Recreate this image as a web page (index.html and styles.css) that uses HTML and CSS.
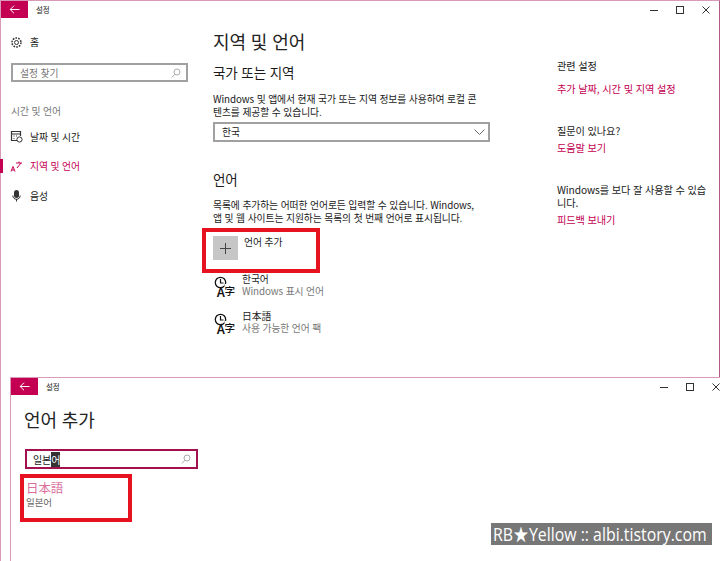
FILE: index.html
```html
<!DOCTYPE html>
<html lang="ko">
<head>
    <meta charset="UTF-8">
    <meta name="viewport" content="width=device-width, initial-scale=1.0">
    <title>설정</title>
    <link rel="stylesheet" href="styles.css">
</head>
<body>
    <!-- first window -->
    <section class="window window-main">
        <header class="titlebar">
            <div class="back-btn">
                <svg width="11" height="9" viewBox="0 0 11 9"><path d="M5 .7 1.200 4.500 5 8.300M1.200 4.500H10.500" fill="none" stroke="#fff" stroke-width="1"/></svg>
            </div>
            <span class="app-name">설정</span>
            <div class="win-controls">
                <svg width="8" height="8" viewBox="0 0 8 8"><path d="M0 4.500H8" stroke="#333" stroke-width="1"/></svg>
                <svg width="8" height="8" viewBox="0 0 8 8"><rect x=".5" y=".5" width="7" height="7" fill="none" stroke="#333"/></svg>
                <svg width="8" height="8" viewBox="0 0 8 8"><path d="M.5.500l7 7M7.500.500l-7 7" stroke="#333" stroke-width="1"/></svg>
            </div>
        </header>

        <div class="columns">
            <nav class="sidebar">
                <div class="nav-item home">
                    <svg class="nav-icon" width="13" height="13" viewBox="0 0 13 13"><circle cx="6.500" cy="6.500" r="2" fill="none" stroke="#333"/><circle cx="6.500" cy="6.500" r="4.500" fill="none" stroke="#333" stroke-width="1.600" stroke-dasharray="1.600 1.200"/></svg>
                    <span>홈</span>
                </div>
                <div class="nav-search">
                    <span>설정 찾기</span>
                    <svg width="10" height="10" viewBox="0 0 10 10"><circle cx="6" cy="4" r="3" fill="none" stroke="#aaa"/><path d="M4 6.200.8 9.400" stroke="#aaa"/></svg>
                </div>
                <div class="nav-heading">시간 및 언어</div>
                <div class="nav-item">
                    <svg class="nav-icon" width="13" height="13" viewBox="0 0 13 13"><path d="M8 10.500H1.500V1.500h9V6M1.500 4h9M3.500 6h1M6 6h1M3.500 8.500h1" fill="none" stroke="#333" stroke-width="1.200"/><circle cx="9.500" cy="9.500" r="2.600" fill="#fff" stroke="#333"/></svg>
                    <span>날짜 및 시간</span>
                </div>
                <div class="nav-item active">
                    <svg class="nav-icon" width="13" height="13" viewBox="0 0 13 13"><path d="M1 11.500 3 6.500l2 5M1.700 10h2.600M6 3h6M9 1.500V3M11 3 7 8" fill="none" stroke="#c30052" stroke-width="1"/></svg>
                    <span>지역 및 언어</span>
                </div>
                <div class="nav-item">
                    <svg class="nav-icon" width="13" height="13" viewBox="0 0 13 13"><rect x="4" y="1" width="5" height="8" rx="2.500" fill="#333"/><path d="M2.800 6.500c0 5 7.400 5 7.400 0M6.500 10v2.500" fill="none" stroke="#333"/></svg>
                    <span>음성</span>
                </div>
            </nav>

            <main class="content">
                <h1 class="page-title">지역 및 언어</h1>
                <h2 class="section-title">국가 또는 지역</h2>
                <p class="desc">Windows 및 앱에서 현재 국가 또는 지역 정보를 사용하여 로컬 콘<br>텐츠를 제공할 수 있습니다.</p>
                <div class="select">
                    <span>한국</span>
                    <svg width="11" height="6" viewBox="0 0 11 6"><path d="M.5.500l5 5 5-5" fill="none" stroke="#666"/></svg>
                </div>
                <h2 class="section-title lang-title">언어</h2>
                <p class="desc">목록에 추가하는 어떠한 언어로든 입력할 수 있습니다. Windows,<br>앱 및 웹 사이트는 지원하는 목록의 첫 번째 언어로 표시됩니다.</p>
                <div class="add-lang">
                    <div class="plus-box">
                        <svg width="11" height="11" viewBox="0 0 11 11"><path d="M5.500 0v11M0 5.500h11" stroke="#444"/></svg>
                    </div>
                    <span>언어 추가</span>
                </div>
                <div class="lang-row">
                    <svg class="lang-icon" width="21" height="23" viewBox="0 0 21 23"><circle cx="6.500" cy="7.500" r="5.200" fill="none" stroke="#111" stroke-width="1.300"/><path d="M6.500 4v4h3" fill="none" stroke="#111" stroke-width="1.200"/><rect x="10.500" y="9" width="10.500" height="13" fill="#fff"/><text x="2.500" y="22" class="glyph-a">A</text><text x="10.500" y="20" class="glyph-ja">字</text></svg>
                    <div>
                        <div class="lang-name">한국어</div>
                        <div class="lang-sub">Windows 표시 언어</div>
                    </div>
                </div>
                <div class="lang-row">
                    <svg class="lang-icon" width="21" height="23" viewBox="0 0 21 23"><circle cx="6.500" cy="7.500" r="5.200" fill="none" stroke="#111" stroke-width="1.300"/><path d="M6.500 4v4h3" fill="none" stroke="#111" stroke-width="1.200"/><rect x="10.500" y="9" width="10.500" height="13" fill="#fff"/><text x="2.500" y="22" class="glyph-a">A</text><text x="10.500" y="20" class="glyph-ja">字</text></svg>
                    <div>
                        <div class="lang-name">日本語</div>
                        <div class="lang-sub">사용 가능한 언어 팩</div>
                    </div>
                </div>
            </main>

            <aside class="related">
                <div class="rel-group">
                    <div class="rel-title first">관련 설정</div>
                    <a class="rel-link">추가 날짜, 시간 및 지역 설정</a>
                </div>
                <div class="rel-group">
                    <div class="rel-title">질문이 있나요?</div>
                    <a class="rel-link">도움말 보기</a>
                </div>
                <div class="rel-group">
                    <div class="rel-title">Windows를 보다 잘 사용할 수 있습<br>니다.</div>
                    <a class="rel-link">피드백 보내기</a>
                </div>
            </aside>
        </div>
        <div class="red-box box-add"></div>
    </section>

    <!-- second window on top -->
    <section class="window window-add">
        <header class="titlebar">
            <div class="back-btn">
                <svg width="11" height="9" viewBox="0 0 11 9"><path d="M5 .7 1.200 4.500 5 8.300M1.200 4.500H10.500" fill="none" stroke="#fff" stroke-width="1"/></svg>
            </div>
            <span class="app-name">설정</span>
            <div class="win-controls">
                <svg width="8" height="8" viewBox="0 0 8 8"><path d="M0 4.500H8" stroke="#333" stroke-width="1"/></svg>
                <svg width="8" height="8" viewBox="0 0 8 8"><rect x=".5" y=".5" width="7" height="7" fill="none" stroke="#333"/></svg>
                <svg width="8" height="8" viewBox="0 0 8 8"><path d="M.5.500l7 7M7.500.500l-7 7" stroke="#333" stroke-width="1"/></svg>
            </div>
        </header>
        <div class="add-body">
            <h1 class="page-title">언어 추가</h1>
            <div class="lang-search">
                <span>일본<mark>어</mark></span>
                <svg width="10" height="10" viewBox="0 0 10 10"><circle cx="6" cy="4" r="3" fill="none" stroke="#aaa"/><path d="M4 6.200.8 9.400" stroke="#aaa"/></svg>
            </div>
            <div class="result">
                <div class="result-name">日本語</div>
                <div class="result-sub">일본어</div>
            </div>
        </div>
        <div class="red-box box-result"></div>
    </section>

    <div class="watermark"><span class="watermark-text">RB★Yellow :: albi.tistory.com</span></div>
</body>
</html>
```

FILE: styles.css
```css
*{
    box-sizing: border-box;
}
html, body{
    margin: 0;
    padding: 0;
    height: 100%;
}
body{
    position: relative;
    width: 720px;
    height: 561px;
    overflow: hidden;
    background: #fff;
    color: #1a1a1a;
    font-family: "Noto Sans CJK KR", "Noto Sans", sans-serif;
    font-size: 9.8px;
    letter-spacing: -0.1px;
}
h1, h2, p{
    margin: 0;
    font-weight: 400;
}

/* windows */
.window{
    position: absolute;
    background: #fff;
    border-top: 1px solid #d79ab8;
    border-left: 1px solid #d79ab8;
}
.window-main{
    left: 0;
    top: 0;
    width: 720px;
    height: 561px;
    border-right: 1px solid #b05a88;
}
.window-add{
    left: 10px;
    top: 377px;
    width: 710px;
    height: 184px;
}
.titlebar{
    display: flex;
    align-items: center;
    height: 17px;
}
.back-btn{
    display: flex;
    align-items: center;
    justify-content: center;
    width: 27px;
    height: 17px;
    background: #c30052;
}
.app-name{
    margin-left: 8px;
    font-size: 7.5px;
}
.win-controls{
    display: flex;
    gap: 18px;
    margin-left: auto;
    margin-right: 9px;
}
.window-add .win-controls{
    margin-right: 0;
}

/* columns */
.columns{
    display: flex;
}
.sidebar{
    flex: none;
    width: 212px;
    padding-top: 16px;
}
.nav-item{
    display: flex;
    align-items: center;
    gap: 7px;
    height: 29.5px;
    padding-left: 9px;
    position: relative;
}
.nav-item.home{
    height: 16px;
}
.nav-icon{
    flex: none;
}
.nav-item.active{
    color: #c30052;
}
.nav-item.active::before{
    content: "";
    position: absolute;
    left: -1px;
    top: 7px;
    width: 3px;
    height: 14px;
    background: #c30052;
}
.nav-search{
    display: flex;
    align-items: center;
    justify-content: space-between;
    width: 177px;
    height: 19px;
    margin: 13px 0 0 10px;
    padding: 0 5px 0 7px;
    border: 2px solid #a0a0a0;
    color: #777;
}
.nav-heading{
    margin: 21px 0 3px 10px;
    line-height: 16px;
    color: #777;
}

.content{
    flex: none;
    width: 344px;
    padding-top: 10px;
}
.page-title{
    font-size: 18px;
    line-height: 26px;
    color: #222;
}
.section-title{
    margin-top: 8px;
    font-size: 13.5px;
    line-height: 20px;
}
.lang-title{
    margin-top: 27px;
}
.desc{
    margin-top: 11px;
    line-height: 12.5px;
    white-space: nowrap;
}
.lang-title + .desc{
    margin-top: 10px;
}
.select{
    display: flex;
    align-items: center;
    justify-content: space-between;
    width: 277px;
    height: 20px;
    margin-top: 4px;
    padding: 0 3px 0 7px;
    border: 2px solid #a0a0a0;
}
.add-lang{
    display: flex;
    gap: 6px;
    margin-top: 12px;
    height: 24px;
}
.plus-box{
    display: flex;
    align-items: center;
    justify-content: center;
    width: 25px;
    height: 24px;
    background: #c6c6c6;
}
.add-lang span{
    line-height: 13px;
}
.lang-row{
    display: flex;
    gap: 7px;
    height: 37px;
    padding-left: 1px;
}
.add-lang + .lang-row{
    margin-top: 13px;
}
.lang-icon{
    flex: none;
    margin-top: 2px;
    overflow: visible;
}
.glyph-a{
    font-family: "Liberation Sans", sans-serif;
    font-size: 12px;
    font-weight: 700;
    fill: #111;
}
.glyph-ja{
    font-family: "Noto Sans CJK JP", sans-serif;
    font-size: 10.5px;
    font-weight: 500;
    fill: #111;
}
.lang-name{
    line-height: 12px;
}
.lang-sub{
    line-height: 12px;
    color: #777;
}

.related{
    width: 150px;
    padding-top: 41px;
    font-size: 10.2px;
    white-space: nowrap;
}
.rel-group{
    margin-bottom: 29px;
}
.rel-title{
    line-height: 13px;
    margin-bottom: 4px;
}
.rel-title.first{
    margin-bottom: 10px;
}
.rel-link{
    display: block;
    line-height: 13px;
    color: #c30052;
}

/* red highlight boxes, drawn over the shot */
.red-box{
    position: absolute;
    border: 4px solid #e6121f;
}
.box-add{
    left: 201px;
    top: 227px;
    width: 118px;
    height: 45px;
}
.box-result{
    left: 9px;
    top: 96px;
    width: 112px;
    height: 48px;
}

/* add language */
.add-body{
    padding: 11px 0 0 13px;
}
.lang-search{
    display: flex;
    align-items: center;
    justify-content: space-between;
    width: 173px;
    height: 20px;
    margin: 17px 0 0 1px;
    padding: 0 5px 0 6px;
    border: 2px solid #a3104f;
    font-size: 10px;
}
.lang-search mark{
    background: #333;
    color: #fff;
}
.result{
    margin: 10px 0 0 2px;
}
.result-name{
    font-family: "Noto Sans CJK JP", sans-serif;
    font-size: 12.5px;
    line-height: 17px;
    color: #d9709c;
}
.result-sub{
    font-size: 9.5px;
    line-height: 13px;
    color: #666;
}

.watermark{
    position: absolute;
    left: 491px;
    top: 523px;
    width: 221px;
    height: 22px;
    padding-left: 2px;
    background: #777;
    color: #fff;
    font-family: "Open Sans", sans-serif;
    font-size: 19px;
    letter-spacing: 0;
    line-height: 22px;
    white-space: nowrap;
}
.watermark-text{
    display: inline-block;
    transform: scaleX(0.835);
    transform-origin: left center;
}
```
